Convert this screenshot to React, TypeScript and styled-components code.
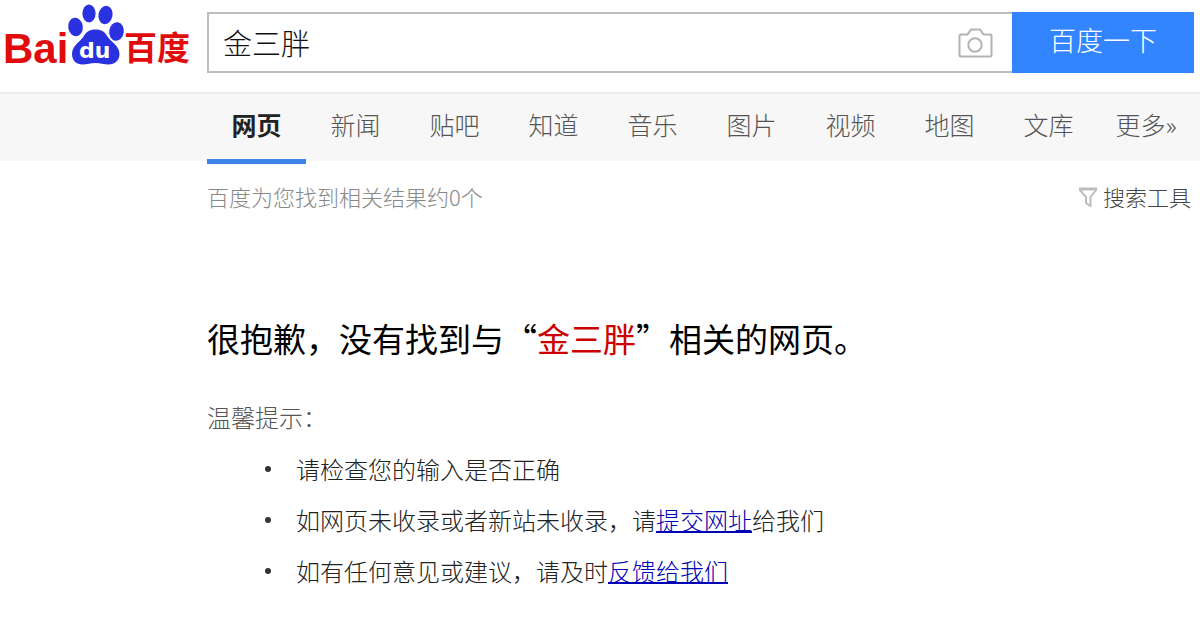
import React, { useState } from "react";
import styled, { createGlobalStyle } from "styled-components";

const GlobalStyle = createGlobalStyle`
  *, *::before, *::after { box-sizing: border-box; }
  body {
    margin: 0;
    background: #fff;
    color: #222;
    font-family: "Noto Sans CJK SC", sans-serif;
    font-weight: 300;
  }
  ul { list-style: none; margin: 0; padding: 0; }
`;

const GUTTER = "207px";

const Header = styled.header`
  display: grid;
  grid-template-columns: ${GUTTER} minmax(0, 1fr);
  padding: 0 6px 0 0;
`;

const LogoLink = styled.a`
  display: block;
  height: 72px;
`;

const SearchForm = styled.form`
  display: flex;
  height: 61px;
  margin: 12px 0 19px;
`;

const SearchField = styled.div`
  flex: 1;
  min-width: 0;
  display: flex;
  align-items: center;
  border: 2px solid #bdbdbd;
  border-right: 0;
  padding: 0 19px 0 14px;
`;

const SearchInput = styled.input`
  flex: 1;
  min-width: 0;
  height: 100%;
  border: 0;
  outline: 0;
  padding: 0 0 2px;
  background: transparent;
  color: #111;
  font: inherit;
  font-size: 29px;
`;

const IconButton = styled.button`
  display: flex;
  border: 0;
  padding: 0;
  background: transparent;
  cursor: pointer;
`;

const SubmitButton = styled.button`
  width: 182px;
  border: 0;
  padding: 0 0 6px;
  background: #3385ff;
  color: #fff;
  font: inherit;
  font-size: 27px;
  line-height: 40px;
  cursor: pointer;
`;

const Nav = styled.nav`
  display: flow-root;
  background: #f7f7f7;
  border-top: 2px solid #ebebeb;
  padding-left: ${GUTTER};
`;

const TabList = styled.ul`
  && {
    display: flex;
    margin-bottom: -3px;
  }
`;

const Tab = styled.a<{ $active?: boolean; $wide?: boolean }>`
  display: block;
  width: ${(p) => (p.$wide ? "96px" : "99px")};
  padding-bottom: 5px;
  border-bottom: 5px solid ${(p) => (p.$active ? "#3c84e8" : "transparent")};
  color: ${(p) => (p.$active ? "#222" : "#555")};
  font-size: 25px;
  font-weight: ${(p) => (p.$active ? 700 : "inherit")};
  line-height: 60px;
  text-align: center;
  text-decoration: none;
  white-space: nowrap;
`;

const Main = styled.main`
  padding: 17px 9px 30px ${GUTTER};
`;

const InfoBar = styled.div`
  display: flex;
  justify-content: space-between;
  align-items: center;
  font-size: 22px;
  line-height: 36px;
  color: #888;
`;

const ToolButton = styled(IconButton)`
  align-items: center;
  gap: 5px;
  color: #444;
  font: inherit;
  line-height: 36px;
`;

const Title = styled.h1`
  margin: 99px 0 0;
  color: #000;
  font-size: 33px;
  font-weight: 400;
  line-height: 50px;
`;

const Keyword = styled.em`
  color: #c00;
  font-style: normal;
`;

const TipsTitle = styled.p`
  margin: 36px 0 0;
  color: #555;
  font-size: 24px;
  line-height: 36px;
`;

const Tips = styled.ul`
  && {
    margin-top: 8px;
    padding-left: 58px;
  }
`;

const Tip = styled.li`
  display: flex;
  align-items: center;
  font-size: 24px;
  line-height: 51px;

  &::before {
    content: "";
    flex: none;
    width: 6px;
    height: 6px;
    margin-right: 25px;
    border-radius: 50%;
    background: #333;
  }
`;

const TextLink = styled.a`
  color: #0000b4;
  text-underline-offset: 1px;
  text-decoration-thickness: 2px;
`;

const Logo = () => (
  <svg width="200" height="72" viewBox="0 0 200 72" role="img" aria-label="Baidu 百度">
    <g fill="#e10b0b" fontWeight="700">
      <text x="3" y="63" fontFamily="Liberation Sans, sans-serif" fontSize="42">
        Bai
      </text>
      <text x="124" y="60" fontFamily="Noto Sans CJK SC, sans-serif" fontSize="33">
        百度
      </text>
    </g>
    <g fill="#2a32e0">
      <ellipse cx="75.500" cy="27" rx="7.300" ry="9.300" transform="rotate(-8 75.500 27)" />
      <ellipse cx="89" cy="13.500" rx="6.600" ry="9" />
      <ellipse cx="105.500" cy="15" rx="7" ry="9.200" transform="rotate(12 105.500 15)" />
      <ellipse cx="116.500" cy="31.500" rx="7.300" ry="9.300" transform="rotate(8 116.500 31.500)" />
      <path d="M95.500 29.500c-6 0-9.500 2.500-12 7-3 5-11.500 9-11.500 17.500 0 6.500 4.500 10.500 10.500 10.500 5 0 8-1.500 13-1.500s8 1.500 13 1.500c6 0 11-4 11-10.500 0-8.500-9-12.500-12-17.500-2.500-4.500-6-7-12-7z" />
    </g>
    <text x="79" y="58" fill="#fff" fontFamily="DejaVu Sans, sans-serif" fontSize="22" fontWeight="700">
      du
    </text>
  </svg>
);

const CameraIcon = () => (
  <svg width="35" height="30" viewBox="0 0 35 30" fill="none" stroke="#b3b3b3" strokeWidth="2" aria-hidden="true">
    <path d="M3 6.500h6.500l3.500-5h9l3.500 5H32a1.500 1.500 0 0 1 1.500 1.500v19A1.500 1.500 0 0 1 32 28.500H3A1.500 1.500 0 0 1 1.500 27V8A1.500 1.500 0 0 1 3 6.500z" />
    <circle cx="17" cy="17" r="6.700" />
  </svg>
);

const FunnelIcon = () => (
  <svg width="20" height="22" viewBox="0 -2 20 22" fill="none" stroke="#bdbdbd" aria-hidden="true">
    <path strokeWidth="3" d="M1 2h18" />
    <path strokeWidth="2" d="M1.500 2.500L8 10v6l4.500 3V10L18.500 2.500" />
  </svg>
);

const TABS = ["网页", "新闻", "贴吧", "知道", "音乐", "图片", "视频", "地图", "文库", "更多»"];

export default function App() {
  const [query, setQuery] = useState("金三胖");

  return (
    <div lang="zh-CN">
      <GlobalStyle />
      <Header>
        <LogoLink href="#" aria-label="百度首页">
          <Logo />
        </LogoLink>
        <SearchForm role="search" onSubmit={(e) => e.preventDefault()}>
          <SearchField>
            <SearchInput
              aria-label="搜索"
              value={query}
              onChange={(e) => setQuery(e.target.value)}
            />
            <IconButton type="button" aria-label="按图片搜索">
              <CameraIcon />
            </IconButton>
          </SearchField>
          <SubmitButton type="submit">百度一下</SubmitButton>
        </SearchForm>
      </Header>

      <Nav>
        <TabList>
          {TABS.map((label, i) => (
            <li key={label}>
              <Tab href="#" $active={i === 0} $wide={i === TABS.length - 1}>
                {label}
              </Tab>
            </li>
          ))}
        </TabList>
      </Nav>

      <Main>
        <InfoBar>
          <span>百度为您找到相关结果约0个</span>
          <ToolButton type="button">
            <FunnelIcon />
            搜索工具
          </ToolButton>
        </InfoBar>

        <Title>
          很抱歉，没有找到与“<Keyword>金三胖</Keyword>”相关的网页。
        </Title>

        <TipsTitle>温馨提示：</TipsTitle>
        <Tips>
          <Tip>请检查您的输入是否正确</Tip>
          <Tip>
            <span>
              如网页未收录或者新站未收录，请<TextLink href="#">提交网址</TextLink>给我们
            </span>
          </Tip>
          <Tip>
            <span>
              如有任何意见或建议，请及时<TextLink href="#">反馈给我们</TextLink>
            </span>
          </Tip>
        </Tips>
      </Main>
    </div>
  );
}
